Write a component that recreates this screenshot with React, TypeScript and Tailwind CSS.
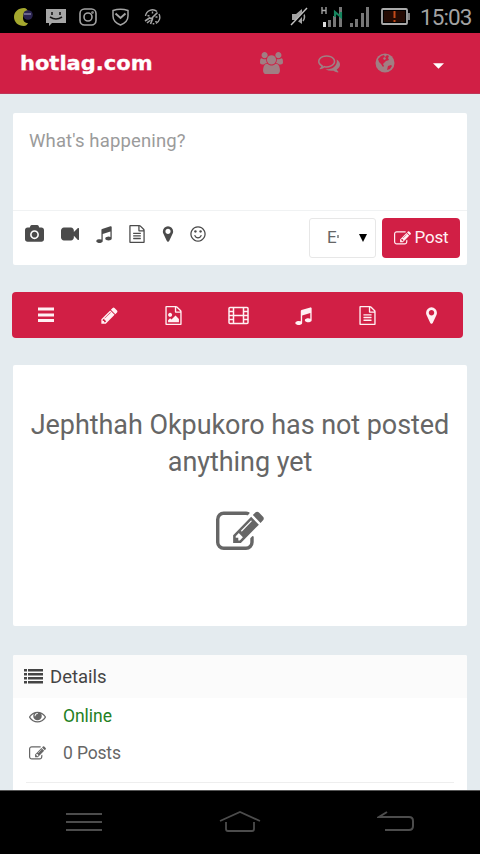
import React from 'react';

interface GlyphProps {
  d: string;
  className: string;
  viewBox?: string;
}

const paths = {
  edit: 'M888 1184l116-116-152-152-116 116v56h96v96h56zm440-720q-16-16-33 1l-350 350q-17 17-1 33t33-1l350-350q17-17 1-33zm80 594v190q0 119-84.5 203.5t-203.5 84.5h-832q-119 0-203.5-84.5t-84.5-203.5v-832q0-119 84.5-203.5t203.5-84.5h832q63 0 117 25 15 7 18 23 3 17-9 29l-49 49q-14 14-32 8-23-6-45-6h-832q-66 0-113 47t-47 113v832q0 66 47 113t113 47h832q66 0 113-47t47-113v-126q0-13 9-22l64-64q15-15 35-7t20 29zm-96-738l288 288-672 672h-288v-288zm444 132l-92 92-288-288 92-92q28-28 68-28t68 28l152 152q28 28 28 68t-28 68z',
  camera: 'M896 672q119 0 203.5 84.5t84.5 203.5-84.5 203.5-203.5 84.5-203.5-84.5-84.5-203.5 84.5-203.5 203.5-84.5zm704-416q106 0 181 75t75 181v896q0 106-75 181t-181 75h-1408q-106 0-181-75t-75-181v-896q0-106 75-181t181-75h224l51-136q19-49 69.5-84.5t103.5-35.5h512q53 0 103.5 35.5t69.5 84.5l51 136h224zm-704 1152q185 0 316.5-131.5t131.5-316.5-131.5-316.5-316.5-131.5-316.5 131.5-131.5 316.5 131.5 316.5 316.5 131.5z',
  video: 'M1792 352v1088q0 42-39 59-13 5-25 5-27 0-45-19l-403-403v166q0 119-84.5 203.5t-203.5 84.5h-704q-119 0-203.5-84.5t-84.5-203.5v-704q0-119 84.5-203.5t203.5-84.5h704q119 0 203.5 84.5t84.5 203.5v165l403-402q18-19 45-19 12 0 25 5 39 17 39 59z',
  music: 'M1664 224v1120q0 50-34 89t-86 60.5-103.5 32-96.5 10.5-96.5-10.5-103.5-32-86-60.5-34-89 34-89 86-60.5 103.5-32 96.5-10.5q105 0 192 39v-537l-768 237v709q0 50-34 89t-86 60.5-103.5 32-96.5 10.5-96.5-10.5-103.5-32-86-60.5-34-89 34-89 86-60.5 103.5-32 96.5-10.5q105 0 192 39v-967q0-31 19-56.5t49-35.5l832-256q12-4 28-4 40 0 68 28t28 68z',
  file: 'M1596 380q28 28 48 76t20 88v1152q0 40-28 68t-68 28h-1344q-40 0-68-28t-28-68v-1600q0-40 28-68t68-28h896q40 0 88 20t76 48zm-444-244v376h376q-10-29-22-41l-313-313q-12-12-41-22zm384 1528v-1024h-416q-40 0-68-28t-28-68v-416h-768v1536h1280zm-1024-864q0-14 9-23t23-9h704q14 0 23 9t9 23v64q0 14-9 23t-23 9h-704q-14 0-23-9t-9-23v-64zm736 224q14 0 23 9t9 23v64q0 14-9 23t-23 9h-704q-14 0-23-9t-9-23v-64q0-14 9-23t23-9h704zm0 256q14 0 23 9t9 23v64q0 14-9 23t-23 9h-704q-14 0-23-9t-9-23v-64q0-14 9-23t23-9h704z',
  photo: 'M1596 380q28 28 48 76t20 88v1152q0 40-28 68t-68 28h-1344q-40 0-68-28t-28-68v-1600q0-40 28-68t68-28h896q40 0 88 20t76 48zm-444-244v376h376q-10-29-22-41l-313-313q-12-12-41-22zm384 1528v-1024h-416q-40 0-68-28t-28-68v-416h-768v1536h1280zm-128-448v320h-1024v-192l192-192 128 128 384-384zm-832-192q-80 0-136-56t-56-136 56-136 136-56 136 56 56 136-56 136-136 56z',
  marker: 'M1152 640q0-106-75-181t-181-75-181 75-75 181 75 181 181 75 181-75 75-181zm256 0q0 109-33 179l-364 774q-16 33-47.5 52t-67.5 19-67.5-19-46.500-52l-365-774q-33-70-33-179 0-212 150-362t362-150 362 150 150 362z',
  smile: 'M1262 1075q-37 121-138 195t-228 74-228-74-138-195q-8-25 4-48.5t38-31.5q25-8 48.5 4t31.5 38q25 80 92.5 129.5t151.5 49.5 151.5-49.5 92.5-129.5q8-26 32-38t49-4 37 31.5 4 48.5zm-494-435q0 53-37.5 90.5t-90.5 37.5-90.5-37.5-37.5-90.5 37.5-90.5 90.5-37.5 90.5 37.5 37.5 90.5zm512 0q0 53-37.5 90.5t-90.5 37.5-90.5-37.5-37.5-90.5 37.5-90.5 90.5-37.5 90.5 37.5 37.5 90.5zm256 256q0-130-51-248.5t-136.5-204-204-136.5-248.5-51-248.5 51-204 136.5-136.5 204-51 248.5 51 248.5 136.5 204 204 136.5 248.5 51 248.5-51 204-136.5 136.5-204 51-248.5zm128 0q0 209-103 385.5t-279.5 279.5-385.5 103-385.5-103-279.5-279.5-103-385.5 103-385.5 279.5-279.5 385.5-103 385.5 103 279.5 279.5 103 385.5z',
  pencil: 'M491 1536l91-91-235-235-91 91v107h128v128h107zm523-928q0-22-22-22-10 0-17 7l-542 542q-7 7-7 17 0 22 22 22 10 0 17-7l542-542q7-7 7-17zm-54-192l416 416-832 832h-416v-416zm683 96q0 53-37 90l-166 166-416-416 166-165q36-38 90-38 53 0 91 38l235 234q37 39 37 91z',
  eye: 'M1664 960q-152-236-381-353 61 104 61 225 0 185-131.5 316.5t-316.5 131.5-316.5-131.5-131.5-316.5q0-121 61-225-229 117-381 353 133 205 333.5 326.5t434.5 121.5 434.5-121.5 333.5-326.5zm-720-384q0-20-14-34t-34-14q-125 0-214.5 89.5t-89.5 214.5q0 20 14 34t34 14 34-14 14-34q0-86 61-147t147-61q20 0 34-14t14-34zm848 384q0 34-20 69-140 230-376.5 368.5t-499.5 138.5-499.5-139-376.5-368q-20-35-20-69t20-69q140-229 376.5-368t499.5-139 499.5 139 376.5 368q20 35 20 69z',
  users: 'M593 896q-162 5-265 128h-134q-82 0-138-40.5t-56-118.5q0-353 124-353 6 0 43.5 21t97.5 42.5 119 21.5q67 0 133-23-5 37-5 66 0 139 81 256zm1071 637q0 120-73 189.5t-194 69.5h-874q-121 0-194-69.5t-73-189.5q0-53 3.5-103.5t14-109 26.5-108.5 43-97.5 62-81 85.5-53.5 111.5-20q10 0 43 21.5t73 48 107 48 135 21.5 135-21.5 107-48 73-48 43-21.5q61 0 111.5 20t85.5 53.5 62 81 43 97.5 26.5 108.5 14 109 3.5 103.5zm-1024-1277q0 106-75 181t-181 75-181-75-75-181 75-181 181-75 181 75 75 181zm704 384q0 159-112.5 271.5t-271.5 112.5-271.5-112.5-112.5-271.5 112.5-271.5 271.5-112.5 271.5 112.5 112.5 271.5zm576 225q0 78-56 118.5t-138 40.5h-134q-103-123-265-128 81-117 81-256 0-29-5-66 66 23 133 23 59 0 119-21.5t97.5-42.5 43.5-21q124 0 124 353zm-128-609q0 106-75 181t-181 75-181-75-75-181 75-181 181-75 181 75 75 181z',
  comments: 'M704 384q-153 0-286 52t-211.5 141-78.5 191q0 82 53 158t149 132l97 56-35 84q34-20 62-39l44-31 53 10q78 14 153 14 153 0 286-52t211.5-141 78.5-191-78.5-191-211.5-141-286-52zm0-128q191 0 353.5 68.5t256.5 186.5 94 257-94 257-256.5 186.5-353.5 68.5q-86 0-176-16-124 88-278 128-36 9-86 16h-3q-11 0-20.5-8t-11.5-21q-1-3-1-6.5t.5-6.5 2-6l2.5-5 3.5-5.5 4-5 4.5-5 4-4.5q5-6 23-25t26-29.5 22.5-29 25-38.5 20.5-44q-124-72-195-177t-71-224q0-139 94-257t256.5-186.5 353.5-68.5zm822 1169q10 24 20.5 44t25 38.5 22.5 29 26 29.5 23 25q1 1 4 4.5t4.5 5 4 5 3.5 5.5l2.5 5 2 6 .5 6.5-1 6.5q-3 14-13 22t-22 7q-50-7-86-16-154-40-278-128-90 16-176 16-271 0-472-132 58 4 88 4 161 0 309-45t264-129q125-92 192-212t67-254q0-77-23-152 129 71 204 178t75 230q0 120-71 224.5t-195 176.5z',
};

const Glyph: React.FC<GlyphProps> = ({ d, className, viewBox = '0 0 1792 1792' }) => (
  <svg viewBox={viewBox} className={className} fill="currentColor" preserveAspectRatio="none">
    <path d={d} />
  </svg>
);

const StatusBar: React.FC = () => (
  <div className="h-[33px] bg-black flex items-center justify-between pl-3.5 pr-[8px] text-[#a3a3a3]">
    <div className="flex items-center">
      <svg viewBox="0 0 20 20" className="w-5 h-5">
        <path d="M10 1C4 1 0 5 0 10s4 9 10 9c2 0 3-1 4-3-3 0-5-2-5-5s2-5 5-6c0-2-2-4-4-4Z" fill="#a5a82e" />
        <circle cx="14" cy="8" r="4.8" fill="#29234f" />
        <path d="M10 7h7" stroke="#8a86a8" strokeWidth="1.4" />
      </svg>
      <svg viewBox="0 0 20 18" className="w-5 h-[18px] ml-3">
        <path d="M0 1h20v14H6l-3 3v-3H0Z" fill="#a6a6a6" />
        <path d="M6 4v3M14 4v3M4 9q6 4 12 0" stroke="#151515" strokeWidth="1.6" fill="none" />
      </svg>
      <svg viewBox="0 0 18 18" className="w-[18px] h-[18px] ml-[13px]" fill="none" stroke="currentColor" strokeWidth="1.6">
        <rect x="1" y="1" width="16" height="16" rx="4.5" />
        <circle cx="9" cy="9" r="4" />
        <circle cx="13.5" cy="4.5" r=".5" />
      </svg>
      <svg viewBox="0 0 17 18" className="w-[17px] h-[18px] ml-[15px]" fill="none" stroke="currentColor" strokeWidth="1.5">
        <path d="M1 2.5Q8.5 0 16 2.5V8q0 6-7.5 9Q1 14 1 8Z" />
        <path d="m3.5 5.500 5 4.500 5-4.500" strokeWidth="2" />
      </svg>
      <svg viewBox="0 0 17 18" className="w-[17px] h-[18px] ml-[15px]" fill="none" stroke="currentColor" strokeWidth="1.4">
        <path d="M1.500 8A7 7 0 0 1 13 3.500M15 6a7 7 0 0 1-3 9.500M3.500 7.500l2 .5M8.500 3.500v2M13.500 9h-2" />
        <path d="M13.500 4.500 8.500 9.500 7 13M1 13l4.500-3 3 1-2 5M3 15l3-2.500M9.500 16.500v-1.500M12 13v1.500" strokeWidth="1.600" />
      </svg>
    </div>
    <div className="flex items-center">
      <svg viewBox="0 0 19 20" className="w-[19px] h-5" fill="currentColor">
        <path d="M2 7h4l6-5v15l-6-4H2Z" />
        <path d="M13 6q3 4 0 8" fill="none" stroke="currentColor" strokeWidth="1.5" />
        <path d="M2 19 17 2" stroke="#000" strokeWidth="3" />
        <path d="M1 18 17 1" stroke="#c2c2c2" strokeWidth="1.4" />
      </svg>
      <svg viewBox="0 0 22 22" className="w-[22px] h-[22px] ml-3">
        <path d="M1 1v7M5 1v7M1 4.5h4" stroke="#aaa" strokeWidth="1.3" />
        <path d="M2 16h3v5H2Z" fill="#ddd" />
        <path d="M7 14h3v7H7ZM12 10h3v11h-3ZM18 1h3v20h-3Z" fill="#777" />
        <path d="M14 11V6l6 5V6" fill="none" stroke="#16865f" strokeWidth="2.2" />
      </svg>
      <svg viewBox="0 0 20 22" className="w-5 h-[22px] ml-[7px]" fill="#777">
        <path d="M0 17h3v4H0ZM5 13h3v8H5ZM11 7h3v14h-3ZM16 1h3v20h-3Z" />
      </svg>
      <svg viewBox="0 0 29 17" className="w-[29px] h-[17px] ml-[11px]">
        <rect x="1" y="1" width="25" height="15" rx="1" fill="#000" stroke="#aaa" strokeWidth="1.8" />
        <path d="M28 5v7" stroke="#aaa" strokeWidth="1.5" />
        <rect x="3" y="3" width="21" height="11" fill="#250b03" />
        <path d="M13.5 3v7M13.5 12v2" stroke="#c44a19" strokeWidth="2" />
      </svg>
      <span className="ml-[10px] text-[22.5px] leading-6 tracking-[-0.9px] w-[52px] whitespace-nowrap">15:03</span>
    </div>
  </div>
);

const Header: React.FC = () => (
  <header className="h-[61px] bg-[#d11f45] border-b border-[#bd3658] flex items-center pl-5 text-[#a17e83]">
    <h1 className="w-[240px] text-white font-bold text-[19px] leading-6 origin-left scale-x-[1.105] [-webkit-text-stroke:0.3px_white] [font-family:'DejaVu_Sans',sans-serif]">hotlag.com</h1>
    <Glyph d={paths.users} viewBox="0 0 1920 1792" className="w-[23px] h-[22px]" />
    <Glyph d={paths.comments} className="w-[22px] h-[22px] ml-[35px]" />
    <svg viewBox="0 0 20 20" className="w-5 h-5 ml-[35px]">
      <circle cx="10" cy="10" r="9.5" fill="currentColor" />
      <path d="m6 3 3-1 1 2 2-2 2 1-1 2 1 2-3 1-2 2-1 1 1 2-1 1-2-3-2-2-1-3ZM13 13l3-1 1 1-2 3-3 1Z" fill="#d11f45" />
      <path d="m8 5 2-1 1 2-2 1Z" fill="currentColor" />
    </svg>
    <svg viewBox="0 0 12 6" className="w-[11px] h-1.5 ml-[38px] mt-[5px]" fill="#fff">
      <path d="M0 0h12L6 6Z" />
    </svg>
  </header>
);

const Composer: React.FC = () => (
  <section className="h-[152px] rounded-[2px] bg-white">
    <div className="h-[98px] border-b border-[#f0f2f3] pl-4 pt-[16px] text-[18.5px] leading-6 text-[#9b9b9b] tracking-[0.14px]">
      What's happening?
    </div>
    <div className="flex items-center h-[54px] pl-3 pr-[7px] text-[#4b4b4b]">
      <div className="flex items-center flex-1 pb-2">
        <Glyph d={paths.camera} viewBox="-64 0 1920 1792" className="w-[19px] h-[18px]" />
        <Glyph d={paths.video} className="w-[18px] h-[18px] ml-[17px]" />
        <Glyph d={paths.music} className="w-[18px] h-[18px] ml-[16px]" />
        <Glyph d={paths.file} className="w-[18px] h-[18px] ml-[15px]" />
        <Glyph d={paths.marker} className="w-[18px] h-[18px] ml-[13px]" />
        <Glyph d={paths.smile} className="w-[18px] h-[18px] ml-[12px]" />
      </div>
      <button className="w-[67px] h-10 mr-[6px] border border-[#e7e7e7] rounded-[3px] flex items-center pl-[17px] text-[#666] text-[17px]">
        <span>E</span>
        <span className="w-[2px] h-[3px] -mt-[4px] bg-[#999]" />
        <svg viewBox="0 0 8 8" className="w-2 h-2 ml-[20px]" fill="#000">
          <path d="M0 0h8L4 8Z" />
        </svg>
      </button>
      <button className="w-[78px] h-10 bg-[#d11f45] text-[#fff0f3] rounded-[4px] flex items-center justify-center text-[17px] tracking-[-0.2px]">
        <Glyph d={paths.edit} className="w-[17px] h-[17px] mr-1" />
        Post
      </button>
    </div>
  </section>
);

const FilterBar: React.FC = () => (
  <nav className="mt-[27px] -ml-px mr-1 pl-0.5 h-[46px] rounded-[4px] bg-[#d11f45] text-[#fff0f3] flex items-center justify-around">
    <svg viewBox="0 0 18 18" className="w-[18px] h-[18px]" fill="currentColor">
      <path d="M1 1.500h16v3H1ZM1 7.500h16v3H1ZM1 13h16v3H1Z" />
    </svg>
    <Glyph d={paths.pencil} className="w-[19px] h-[19px]" />
    <Glyph d={paths.photo} className="w-[19px] h-[19px]" />
    <svg viewBox="0 0 21 19" className="w-[21px] h-[19px]" fill="none" stroke="currentColor" strokeWidth="1.5">
      <rect x="1" y="1.5" width="19" height="16" rx="1" />
      <path d="M5.5 2v15M15.5 2v15M5.5 9.5h10M1 5.5h4.5M1 9.5h4.5M1 13.5h4.5M15.5 5.5H20M15.5 9.5H20M15.5 13.5H20" />
    </svg>
    <Glyph d={paths.music} className="w-[19px] h-[19px]" />
    <Glyph d={paths.file} className="w-[19px] h-[19px]" />
    <Glyph d={paths.marker} className="w-[19px] h-[19px]" />
  </nav>
);

const EmptyPosts: React.FC = () => (
  <section className="mt-[27px] h-[261px] rounded-[2px] bg-white pt-[42px] flex flex-col items-center text-[#666]">
    <p className="text-center text-[27px] leading-[37px] tracking-[-0.06px] whitespace-nowrap">
      Jephthah Okpukoro has not posted
      <br />
      anything yet
    </p>
    <Glyph d={paths.edit} className="w-[48px] h-[49px] mt-[27px]" />
  </section>
);

const Details: React.FC = () => (
  <section className="mt-[29px] h-[135px] rounded-t-[2px] bg-white overflow-hidden">
    <div className="h-[43px] bg-[#fbfbfb] flex items-center pl-[11px] text-[#444]">
      <svg viewBox="0 0 19 16" className="w-[19px] h-4 -mt-0.5" fill="currentColor">
        <path d="M0 1h3v2.5H0ZM4 1h15v2.5H4ZM0 5h3v2.5H0ZM4 5h15v2.5H4ZM0 9h3v2.5H0ZM4 9h15v2.5H4ZM0 13h3v2.5H0ZM4 13h15v2.5H4Z" />
      </svg>
      <h2 className="ml-[7px] mt-0.5 text-[18.5px]">Details</h2>
    </div>
    <ul className="text-[17.5px] text-[#666]">
      <li className="h-[36px] flex items-center pl-4">
        <Glyph d={paths.eye} className="w-[17px] h-[17px]" />
        <span className="ml-[17px] tracking-[-0.05px] text-[#238023]">Online</span>
      </li>
      <li className="h-[39px] flex items-center pl-4">
        <Glyph d={paths.edit} className="w-[17px] h-[17px]" />
        <span className="ml-[17px] tracking-[-0.15px]">0 Posts</span>
      </li>
    </ul>
    <div className="mt-[9px] mx-[13px] border-t border-[#eee]" />
  </section>
);

const NavigationBar: React.FC = () => (
  <footer className="h-16 bg-black border-t border-[#555] flex items-center text-[#4c4c4c]">
    <svg viewBox="0 0 36 20" className="w-9 h-5 ml-[66px] -mt-0.5" fill="none" stroke="currentColor" strokeWidth="2">
      <path d="M0 2h36M0 10h36M0 18h36" />
    </svg>
    <svg viewBox="0 0 42 22" className="w-[42px] h-[22px] ml-[117px] -mt-0.5" fill="none" stroke="currentColor" strokeWidth="1.8">
      <path d="M1 10 21 1l20 9M7 11v7q0 2 2 2h24q2 0 2-2v-7" />
    </svg>
    <svg viewBox="0 0 37 22" className="w-[37px] h-[22px] ml-[116px] -mt-0.5" fill="none" stroke="currentColor" strokeWidth="2">
      <path d="m10 1-8 5h30q4 0 4 4v5q0 4-4 4H8" />
    </svg>
  </footer>
);

const App: React.FC = () => {
  return (
    <div className="w-[480px] h-[854px] overflow-hidden flex flex-col bg-[#e4ebef] [font-family:Roboto,sans-serif]">
      <StatusBar />
      <Header />
      <main className="flex-1 pt-[19px] pl-[13px] pr-[13px]">
        <Composer />
        <FilterBar />
        <EmptyPosts />
        <Details />
      </main>
      <NavigationBar />
    </div>
  );
};

export default App;
